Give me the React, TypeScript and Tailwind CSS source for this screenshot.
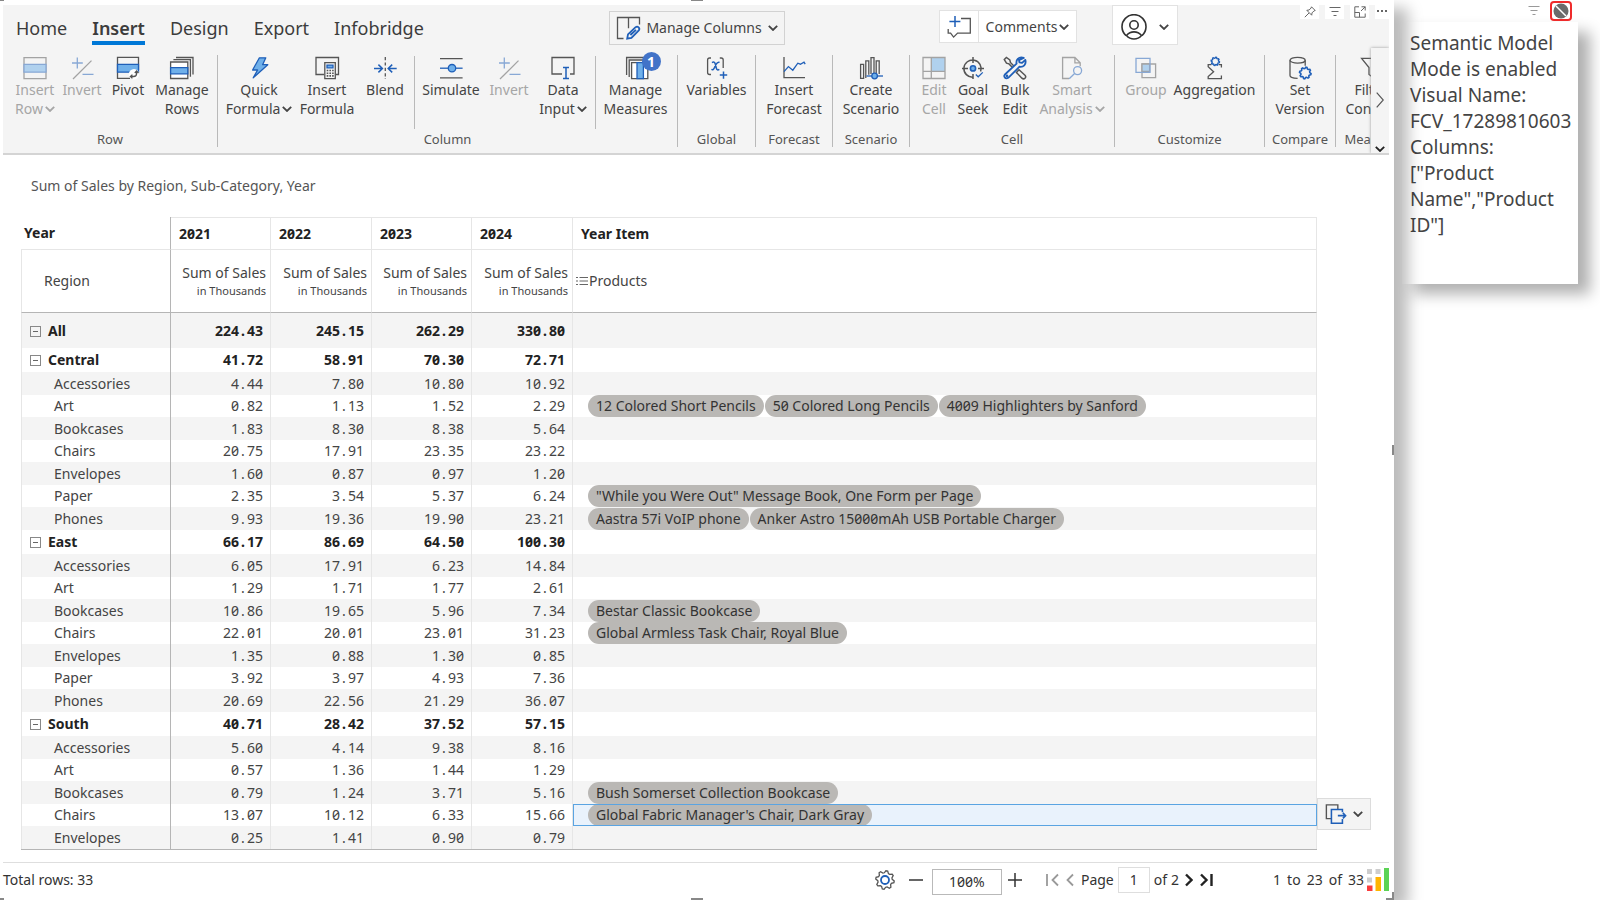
import type { ReactNode } from "react";
import clsx from "clsx";

const GRAY = "#555555";
const BLUE = "#1f5fb8";
const SKY = "#6fb0ea";

interface IconProps {
  children: ReactNode;
}

const Icon = ({ children }: IconProps) => (
  <svg
    viewBox="0 0 24 24"
    className="h-6 w-6 shrink-0 overflow-visible"
    fill="none"
    stroke={GRAY}
    strokeWidth="1.3"
  >
    {children}
  </svg>
);

const Chevron = ({ className }: { className?: string }) => (
  <svg
    viewBox="0 0 10 6"
    className={clsx("h-1.5 w-2.5 shrink-0", className)}
    fill="none"
    stroke="currentColor"
    strokeWidth="1.8"
  >
    <path d="M.8.8 5 5 9.2.8" />
  </svg>
);

const gearPath = (cx: number, cy: number, r: number) =>
  Array.from({ length: 32 }, (_, i) => {
    const a = ((i + 0.5) / 32) * Math.PI * 2;
    const d = i % 4 < 2 ? r : r * 0.78;
    return `${i ? "L" : "M"}${(cx + Math.cos(a) * d).toFixed(2)} ${(cy + Math.sin(a) * d).toFixed(2)}`;
  }).join("") + "Z";

const InsertRowIcon = () => (
  <Icon>
    <path d="M1 1.6h22v21H1z" />
    <path d="M1 8.4h22v7.8H1z" fill={SKY} stroke={BLUE} />
  </Icon>
);

const InvertIcon = () => (
  <Icon>
    <path d="M3 23 21.5 4.6" />
    <path d="M7.3 1.5v11M2 7h10.8M12.5 18.4h11" stroke={BLUE} />
  </Icon>
);

const PivotIcon = () => (
  <Icon>
    <path d="M14 22.4H1.5v-21h21V14" />
    <path d="M13.5 16.2h-12V8.4h21v7.8z" fill={SKY} stroke={BLUE} />
    <circle cx="18" cy="18.2" r="5.2" fill="#fff" stroke="none" />
    <path d="M14.6 20.5h3q3 0 3-3v-2M16.4 18.6l-2 1.9 2 1.9M18.8 17l1.8-2 1.9 2" />
  </Icon>
);

const ManageRowsIcon = () => (
  <Icon>
    <path d="M6 1.5h17v17M3.4 3.7h17v17" />
    <path d="M.6 6h17.2v16.5H.6z" fill="#fff" />
    <path d="M.6 11.6h17.2v6.2H.6z" fill={SKY} stroke={BLUE} />
  </Icon>
);

const BoltIcon = () => (
  <Icon>
    <path
      d="M12.4 1.8h6.4l-3.2 6.9h5.2L6.2 21.8 10.6 14H5.6z"
      fill={SKY}
      stroke={BLUE}
      strokeLinejoin="round"
    />
  </Icon>
);

const InsertFormulaIcon = () => (
  <Icon>
    <path d="M9 18.5H1V1.5h22.5v17H21" />
    <path d="M9.8 6.6h10.5v16H9.8z" fill="#f4f4f4" />
    <path d="M12 9.2h6v2.6h-6z" fill={SKY} stroke={BLUE} />
    <path d="M11.7 14.5h7M11.7 17.2h7M11.7 19.9h7" strokeDasharray="1.6 1.1" strokeWidth="1.6" />
  </Icon>
);

const BlendIcon = () => (
  <Icon>
    <path d="M12.3 1v22" strokeDasharray="3.2 2.2" />
    <path
      d="M1 12.5h8.2M5.4 8.6l4 3.9-4 3.9M23.7 12.5h-8.2M19.2 8.6l-4 3.9 4 3.9"
      stroke={BLUE}
      strokeWidth="1.5"
    />
  </Icon>
);

const SimulateIcon = () => (
  <Icon>
    <path d="M1 2.6h22.6M1 21.8h22.6" />
    <path d="M1 12.2h22.6" stroke={BLUE} />
    <circle cx="13" cy="12.2" r="3.7" fill={SKY} stroke={BLUE} />
  </Icon>
);

const DataInputIcon = () => (
  <Icon>
    <path d="M11 18H1V1.5h22V18h-4" />
    <path d="M12 11.6h6M15 11.6v11M12 22.6h6" stroke={BLUE} strokeWidth="1.5" />
  </Icon>
);

const MeasuresIcon = () => (
  <Icon>
    <path d="M2.6 19V1.5H20M5.2 21V4H22" />
    <path d="M7.6 6.6h16.2v16H7.6z" fill="#fff" />
    <path d="M13 6.6h6.4v16H13z" fill={SKY} stroke={BLUE} />
  </Icon>
);

const VariablesIcon = () => (
  <Icon>
    <path d="M6 2H4.6Q2.6 2 2.6 4v12.5q0 2 2 2H6M14.8 2h1.4q2 0 2 2v8" />
    <path
      d="M7 6.6q2.4-1.6 3.3 1.4l1 4q.8 3 3 1.3M14.6 6.4q-2-.8-3.6 2l-1.6 3.4q-1 2.6-3 1.6"
      stroke={BLUE}
      strokeWidth="1.5"
    />
    <path d="M18.5 15.4v7.4M14.8 19.1h7.4" stroke={BLUE} strokeWidth="1.5" />
  </Icon>
);

const ForecastIcon = () => (
  <Icon>
    <path d="M2 1v20.6h21" />
    <path d="m2 15.6 4.4-5 4.4 3.6 5-7 2.6 1 3.6-2 1.2 2" stroke={BLUE} />
  </Icon>
);

const ScenarioIcon = () => (
  <Icon>
    <path d="M1.6 8.4h3v14h-3zM6.8 22V4.8h3v14M12 18V1.6h3V17M17.2 17V4.8h3V18" />
    <path d="M7.5 20H24" stroke={BLUE} />
    <circle cx="15.6" cy="20" r="2.8" fill={SKY} stroke={BLUE} />
  </Icon>
);

const EditCellIcon = () => (
  <Icon>
    <path d="M9.3 1.5H23v13.8H9.3z" fill={SKY} stroke="none" />
    <path d="M1 1.5h22v21H1zM9.3 1.5v21M1 15.3h22" />
  </Icon>
);

const GoalIcon = () => (
  <Icon>
    <path d="M19.6 15.5A8.6 8.6 0 1 0 12 21.2M12 1v6M1 12.4h6M17 12.4h6M12 18v5" strokeWidth="1.5" />
    <circle cx="12" cy="12.4" r="2.6" fill={SKY} stroke={BLUE} strokeWidth="1.6" />
    <path d="m14.8 18.6 2.4 2.2 4.6-4.4" stroke={BLUE} />
  </Icon>
);

const BulkEditIcon = () => (
  <Icon>
    <path
      d="M1.3 3.6 3.4 1.4l3.4 2.5.6 2.6 4.2 4.3-1.4 1.4L6 7.9l-2.5-.7zM13.4 16.4l2.6-2.7 6 5.5q1.4 1.6 0 3t-3.1 0z"
      strokeWidth="1.5"
    />
    <path
      d="M20.8 1.9q-3.7-1.3-6 1-1.9 2-1.2 4.7L1.9 18.5q-1.3 1.6 0 3.1t3.3.2L16.5 10.7q2.9.6 4.8-1.4 2-2.2 1-5.5l-3.2 3-2.7-.5-.4-2.2z"
      fill="#f4f4f4"
      stroke={BLUE}
      strokeWidth="1.8"
      strokeLinejoin="round"
    />
    <circle cx="3.9" cy="19.8" r=".7" stroke={BLUE} />
  </Icon>
);

const SmartIcon = () => (
  <Icon>
    <path d="M9 22.5H2.6v-21h12.3l5.3 5.2v3.6M14.9 1.5v5.4h5.3" />
    <circle cx="17.6" cy="14.6" r="4" stroke={BLUE} />
    <path d="m14.6 17.5-5.4 5.2" stroke={BLUE} />
  </Icon>
);

const GroupIcon = () => (
  <Icon>
    <path d="M8 8h13.6v13.6H8z" />
    <path d="M8 8h7.6v7.4H8z" fill={SKY} />
    <path d="M2 2.3h14v14H2z" stroke={BLUE} />
  </Icon>
);

const AggregationIcon = () => (
  <Icon>
    <path d="M8.4 8.6H5.2v2.2l5.4 4.9-5.4 4.8v2.1h13.2v-3M16 8.6h2.4v2.8" />
    <path d={gearPath(12.3, 5.4, 4.2)} stroke={BLUE} strokeWidth="1.4" />
  </Icon>
);

const VersionIcon = () => (
  <Icon>
    <ellipse cx="9.6" cy="4.2" rx="7.6" ry="2.9" />
    <path d="M2 4.2v15.4q0 2.6 7.6 2.8M17.2 4.2v5.6" />
    <path d={gearPath(17.3, 17, 5.8)} stroke={BLUE} strokeWidth="1.6" />
  </Icon>
);

const FilterIcon = () => (
  <Icon>
    <path d="M2.6 2.4h18.8L14 11.5v10l-4-3v-7z" />
  </Icon>
);

interface Tool {
  icon: ReactNode;
  lines: string[];
  width: string;
  disabled?: boolean;
  menu?: boolean;
  badge?: string;
  divider?: boolean;
}

interface ToolGroup {
  name: string;
  tools: Tool[];
}

const groups: ToolGroup[] = [
  {
    name: "Row",
    tools: [
      { icon: <InsertRowIcon />, lines: ["Insert", "Row"], width: "w-[52px]", disabled: true, menu: true },
      { icon: <InvertIcon />, lines: ["Invert"], width: "w-[42px]", disabled: true },
      { icon: <PivotIcon />, lines: ["Pivot"], width: "w-[50px]" },
      { icon: <ManageRowsIcon />, lines: ["Manage", "Rows"], width: "w-[58px]" },
    ],
  },
  {
    name: "Column",
    tools: [
      { icon: <BoltIcon />, lines: ["Quick", "Formula"], width: "w-[70px]", menu: true },
      { icon: <InsertFormulaIcon />, lines: ["Insert", "Formula"], width: "w-[66px]" },
      { icon: <BlendIcon />, lines: ["Blend"], width: "w-[50px]", divider: true },
      { icon: <SimulateIcon />, lines: ["Simulate"], width: "w-[64px]" },
      { icon: <InvertIcon />, lines: ["Invert"], width: "w-[52px]", disabled: true },
      { icon: <DataInputIcon />, lines: ["Data", "Input"], width: "w-[56px]", menu: true, divider: true },
      { icon: <MeasuresIcon />, lines: ["Manage", "Measures"], width: "w-[71px]", badge: "1" },
    ],
  },
  { name: "Global", tools: [{ icon: <VariablesIcon />, lines: ["Variables"], width: "w-[65px]" }] },
  { name: "Forecast", tools: [{ icon: <ForecastIcon />, lines: ["Insert", "Forecast"], width: "w-[64px]" }] },
  { name: "Scenario", tools: [{ icon: <ScenarioIcon />, lines: ["Create", "Scenario"], width: "w-[64px]" }] },
  {
    name: "Cell",
    tools: [
      { icon: <EditCellIcon />, lines: ["Edit", "Cell"], width: "w-9", disabled: true },
      { icon: <GoalIcon />, lines: ["Goal", "Seek"], width: "w-[42px]" },
      { icon: <BulkEditIcon />, lines: ["Bulk", "Edit"], width: "w-[42px]" },
      { icon: <SmartIcon />, lines: ["Smart", "Analysis"], width: "w-[72px]", disabled: true, menu: true },
    ],
  },
  {
    name: "Customize",
    tools: [
      { icon: <GroupIcon />, lines: ["Group"], width: "w-[50px]", disabled: true },
      { icon: <AggregationIcon />, lines: ["Aggregation"], width: "w-[87px]" },
    ],
  },
  { name: "Compare", tools: [{ icon: <VersionIcon />, lines: ["Set", "Version"], width: "w-[58px]" }] },
  { name: "Measure", tools: [{ icon: <FilterIcon />, lines: ["Filter", "Context"], width: "w-[58px]" }] },
];

interface Row {
  name: string;
  values: string[];
  items?: string[];
  selected?: boolean;
}

interface Region extends Row {
  children: Row[];
}

const regions: Region[] = [
  { name: "All", values: ["224.43", "245.15", "262.29", "330.80"], children: [] },
  {
    name: "Central",
    values: ["41.72", "58.91", "70.30", "72.71"],
    children: [
      { name: "Accessories", values: ["4.44", "7.80", "10.80", "10.92"] },
      {
        name: "Art",
        values: ["0.82", "1.13", "1.52", "2.29"],
        items: ["12 Colored Short Pencils", "50 Colored Long Pencils", "4009 Highlighters by Sanford"],
      },
      { name: "Bookcases", values: ["1.83", "8.30", "8.38", "5.64"] },
      { name: "Chairs", values: ["20.75", "17.91", "23.35", "23.22"] },
      { name: "Envelopes", values: ["1.60", "0.87", "0.97", "1.20"] },
      {
        name: "Paper",
        values: ["2.35", "3.54", "5.37", "6.24"],
        items: ['"While you Were Out" Message Book, One Form per Page'],
      },
      {
        name: "Phones",
        values: ["9.93", "19.36", "19.90", "23.21"],
        items: ["Aastra 57i VoIP phone", "Anker Astro 15000mAh USB Portable Charger"],
      },
    ],
  },
  {
    name: "East",
    values: ["66.17", "86.69", "64.50", "100.30"],
    children: [
      { name: "Accessories", values: ["6.05", "17.91", "6.23", "14.84"] },
      { name: "Art", values: ["1.29", "1.71", "1.77", "2.61"] },
      { name: "Bookcases", values: ["10.86", "19.65", "5.96", "7.34"], items: ["Bestar Classic Bookcase"] },
      { name: "Chairs", values: ["22.01", "20.01", "23.01", "31.23"], items: ["Global Armless Task Chair, Royal Blue"] },
      { name: "Envelopes", values: ["1.35", "0.88", "1.30", "0.85"] },
      { name: "Paper", values: ["3.92", "3.97", "4.93", "7.36"] },
      { name: "Phones", values: ["20.69", "22.56", "21.29", "36.07"] },
    ],
  },
  {
    name: "South",
    values: ["40.71", "28.42", "37.52", "57.15"],
    children: [
      { name: "Accessories", values: ["5.60", "4.14", "9.38", "8.16"] },
      { name: "Art", values: ["0.57", "1.36", "1.44", "1.29"] },
      { name: "Bookcases", values: ["0.79", "1.24", "3.71", "5.16"], items: ["Bush Somerset Collection Bookcase"] },
      {
        name: "Chairs",
        values: ["13.07", "10.12", "6.33", "15.66"],
        items: ["Global Fabric Manager's Chair, Dark Gray"],
        selected: true,
      },
      { name: "Envelopes", values: ["0.25", "1.41", "0.90", "0.79"] },
    ],
  },
];

const years = ["2021", "2022", "2023", "2024"];

const ToolButton = ({ tool }: { tool: Tool }) => (
  <button
    type="button"
    disabled={tool.disabled}
    className={clsx("relative flex shrink-0 flex-col items-center", tool.width)}
  >
    <span className={clsx("relative", tool.disabled && "opacity-50")}>
      {tool.icon}
      {tool.badge && (
        <span className="absolute -top-1 left-[18px] flex h-[19px] w-[19px] items-center justify-center rounded-full bg-[#4273c8] text-sm leading-none font-bold text-white">
          {tool.badge}
        </span>
      )}
    </span>
    {tool.lines.map((line, i) => (
      <span
        key={line}
        className={clsx(
          "flex items-center gap-0.5 text-sm leading-[19px] whitespace-nowrap",
          tool.disabled ? "text-[#a6a6a6]" : "text-[#444]"
        )}
      >
        {line}
        {tool.menu && i === tool.lines.length - 1 && <Chevron />}
      </span>
    ))}
  </button>
);

const Ribbon = () => (
  <header className="relative mt-[5px] mr-[5px] ml-[3px] overflow-hidden border-b-2 border-[#d4d4d4] bg-[#f4f4f4]">
    <div className="flex h-[50px] items-start">
      <nav className="flex flex-1 gap-[25px] pt-2.5 pl-[13px] text-lg leading-[26px] text-[#3c3c3c]">
        {["Home", "Insert", "Design", "Export", "Infobridge"].map((tab) => (
          <a
            key={tab}
            href="#"
            className={clsx(
              "border-b-4",
              tab === "Insert" ? "border-[#0078d7] font-semibold" : "border-transparent"
            )}
          >
            {tab}
          </a>
        ))}
      </nav>
      <div className="mr-[211px] flex items-start text-sm text-[#444]">
        <button
          type="button"
          className="mt-1.5 mr-[154px] flex h-[34px] w-[176px] items-center justify-center gap-1.5 border border-[#d2d2d2] whitespace-nowrap"
        >
          <Icon>
            <path d="M7.5 22.5H1.5v-21h22v7M12.5 1.5v10.8" />
            <g stroke={BLUE} strokeWidth="1.8">
              <path d="m12 18.4 7.6-7.2q1.6-1.2 3 .2t.2 3l-7.4 7.4-4.2.8zM14.4 19l5.6-5.2" />
            </g>
          </Icon>
          Manage Columns
          <Chevron />
        </button>
        <div className="mt-[5px] mr-[35px] flex h-[33px] border border-[#e2e2e2] bg-white">
          <button
            type="button"
            aria-label="Add comment"
            className="flex w-[39px] items-center justify-center border-r border-[#e2e2e2]"
          >
            <Icon>
              <path d="M14 3.5h9.3v14.6H10.6l-4 4-3-4H1.2v-4" />
              <path d="M8 1v11M2.4 6.5h11" stroke={BLUE} strokeWidth="1.5" />
            </Icon>
          </button>
          <button type="button" className="flex w-[97px] items-center justify-center gap-0.5">
            Comments
            <Chevron />
          </button>
        </div>
        <button
          type="button"
          aria-label="Account"
          className="flex h-10 w-[66px] items-center justify-center gap-3 border border-[#e2e2e2] bg-white pt-1"
        >
          <svg viewBox="0 0 26 26" className="h-[26px] w-[26px]" fill="none" stroke="#333" strokeWidth="1.6">
            <path d="M5 21.6A12 12 0 1 1 21 21.600" />
            <circle cx="13" cy="11" r="4.2" />
            <path d="M5.5 21.5q3-3.6 7.5-3.6t7.5 3.6Q17.5 25 13 25t-7.5-3.5z" />
          </svg>
          <Chevron />
        </button>
      </div>
    </div>
    <div className="flex pb-1.5">
      {groups.map((group) => (
        <div
          key={group.name}
          className="flex h-[92px] shrink-0 flex-col justify-between border-r border-[#b9b9b9] px-1.5 pt-px"
        >
          <div className="flex h-[73px]">
            {group.tools.map((tool, i) => (
              <div key={i} className="flex">
                <ToolButton tool={tool} />
                {tool.divider && <span className="mx-1 w-px bg-[#b9b9b9]" />}
              </div>
            ))}
          </div>
          <p className="text-center text-[13px] leading-4 text-[#555]">{group.name}</p>
        </div>
      ))}
    </div>
    <div className="absolute top-[43px] right-0 bottom-0 flex w-[18px] flex-col items-center justify-end gap-[38px] bg-[#f4f4f4] pb-px shadow-[0_0_3px_#999]">
      <button type="button" aria-label="Scroll right">
        <svg viewBox="0 0 8 16" className="h-4 w-2" fill="none" stroke="#555" strokeWidth="1.2">
          <path d="m.7.7 6.6 7.3-6.600 7.300" />
        </svg>
      </button>
      <button type="button" aria-label="Collapse ribbon" className="text-[#222]">
        <Chevron />
      </button>
    </div>
    <div className="absolute top-0 right-0 flex gap-1.5 text-[#666]">
      <button type="button" aria-label="Pin" className="h-3.5 w-[19px] bg-white">
        <svg viewBox="0 0 12 12" className="mx-auto h-3 w-3" fill="none" stroke="currentColor">
          <path d="m7.5.8 3.7 3.7-1.2.4-2 2-.3 2.300L2.800 4.300 5.100 4l2-2zM5 7 .8 11.200" />
        </svg>
      </button>
      <button type="button" aria-label="Filters" className="h-3.5 w-[19px] bg-white">
        <svg viewBox="0 0 12 12" className="mx-auto h-3 w-3" fill="none" stroke="currentColor">
          <path d="M.5 1.5h11M2.500 5.5h7M4.5 9.5h3" />
        </svg>
      </button>
      <button type="button" aria-label="Focus mode" className="h-3.5 w-[19px] bg-white">
        <svg viewBox="0 0 12 12" className="mx-auto h-3 w-3" fill="none" stroke="currentColor">
          <path d="M5 .8H.8v10.4h10.4V7.5M7.5.8h3.7v3.7M11.2.8 7 5M.8 6.5h4.7v4.7" />
        </svg>
      </button>
      <button type="button" aria-label="More options" className="h-3.5 w-3.5 bg-white">
        <svg viewBox="0 0 12 12" className="mx-auto h-3 w-3" fill="currentColor">
          <path d="M1 4h2v2H1zM5 4h2v2H5zM9 4h2v2H9z" />
        </svg>
      </button>
    </div>
  </header>
);

// digits are tabular, so the decimal point gets a digit-wide box too
const Amount = ({ value }: { value: string }) => {
  const [whole, fraction] = value.split(".");
  return (
    <>
      {whole}
      <span className="inline-block w-2 text-center">.</span>
      {fraction}
    </>
  );
};

const DataRow = ({ row, index }: { row: Row; index: number }) => (
  <tr className={clsx(index % 2 === 0 ? "h-[23px] bg-[#f4f4f4]" : "h-[22px]")}>
    <th scope="row" className="border-r border-l border-r-[#b5b5b5] border-l-[#e6e6e6] pl-8 text-left font-normal">
      {row.name}
    </th>
    {row.values.map((value, i) => (
      <td key={i} className="border-r border-[#e6e6e6] pr-[7px] text-right">
        <Amount value={value} />
      </td>
    ))}
    <td
      className={clsx(
        "relative pl-[15px]",
        row.selected ? "bg-[#e9f2fc] outline -outline-offset-1 outline-[#5aa4e2]" : "border-r border-[#e6e6e6]"
      )}
    >
      <div className="flex gap-px whitespace-nowrap">
        {row.items?.map((item) => (
          <span key={item} className="h-[22px] rounded-full bg-[#bab8b5] px-2 leading-[22px] text-[#333]">
            {item}
          </span>
        ))}
      </div>
      {row.selected && (
        <button
          type="button"
          aria-label="Copy options"
          className="absolute -top-[6px] left-full flex h-8 w-[54px] items-center justify-center gap-1.5 border border-[#dcdcdc] bg-[#f4f4f4]"
        >
          <svg viewBox="0 0 24 24" className="h-[22px] w-[22px]" fill="none" stroke={GRAY} strokeWidth="1.5">
            <path d="M7 17H1.5V2H14v4.5" />
            <path d="M19 10V7H7v15h12v-4.5M14 13.8h8.5M19.5 10.8l3 3-3 3" stroke={BLUE} strokeWidth="1.7" />
          </svg>
          <Chevron />
        </button>
      )}
    </td>
  </tr>
);

const Collapse = () => (
  <button type="button" aria-label="Collapse" className="mr-[7px] inline-block h-[11px] w-[11px] border border-[#888]">
    <span className="mx-auto block h-px w-[5px] bg-[#666]" />
  </button>
);

const Matrix = () => (
  <table className="w-full table-fixed border-separate border-spacing-0 border-b border-[#b5b5b5] text-sm leading-[22px] text-[#444] slashed-zero [&_td]:py-0">
    <colgroup>
      <col className="w-[150px]" />
      <col className="w-[100px]" />
      <col className="w-[101px]" />
      <col className="w-[100px]" />
      <col className="w-[101px]" />
      <col />
    </colgroup>
    <thead>
      <tr className="h-[33px] text-left font-bold text-[#222]">
        <th className="border-r border-b border-r-[#b5b5b5] border-b-[#e6e6e6] pl-[3px]">Year</th>
        {years.map((year) => (
          <th key={year} className="border-t border-r border-b border-[#e6e6e6] pl-2">
            {year}
          </th>
        ))}
        <th className="border-t border-r border-b border-[#e6e6e6] pl-2">Year Item</th>
      </tr>
      <tr className="h-[63px]">
        <th className="border-r border-b border-l border-[#b5b5b5] border-l-[#e6e6e6] pl-[22px] text-left font-normal">
          Region
        </th>
        {years.map((year) => (
          <th key={year} className="border-r border-b border-r-[#e6e6e6] border-b-[#b5b5b5] pr-1 text-right font-normal">
            <span className="block leading-5">Sum of Sales</span>
            <span className="block text-[11px] leading-4">in Thousands</span>
          </th>
        ))}
        <th className="border-r border-b border-r-[#e6e6e6] border-b-[#b5b5b5] pl-[3px] text-left font-normal">
          <span className="flex items-center gap-px">
            <svg viewBox="0 0 12 10" className="h-2.5 w-3" stroke="#666">
              <path d="M0 1.5h2M0 5h2M0 8.5h2M3.5 1.5H12M3.5 5H12M3.5 8.5H12" />
            </svg>
            Products
          </span>
        </th>
      </tr>
    </thead>
    {regions.map((region) => (
      <tbody key={region.name}>
        <tr
          className={clsx(
            "font-bold text-[#222]",
            region.name === "All" ? "h-[35px] bg-[#f4f4f4]" : "h-6"
          )}
        >
          <th scope="row" className="border-r border-l border-r-[#b5b5b5] border-l-[#e6e6e6] pl-2 text-left">
            <Collapse />
            {region.name}
          </th>
          {region.values.map((value, i) => (
            <td key={i} className="border-r border-[#e6e6e6] pr-[7px] text-right">
              <Amount value={value} />
            </td>
          ))}
          <td className="border-r border-[#e6e6e6]" />
        </tr>
        {region.children.map((row, i) => (
          <DataRow key={row.name} row={row} index={i} />
        ))}
      </tbody>
    ))}
  </table>
);

const StatusBar = () => (
  <footer className="mr-[5px] ml-[3px] flex h-[38px] items-center border-t border-[#dedede] pb-1 text-sm text-[#333] slashed-zero">
    <p className="flex-1">Total rows: 33</p>
    <button type="button" aria-label="Settings">
      <svg viewBox="0 0 20 20" className="h-5 w-5" fill="none" stroke={GRAY} strokeWidth="1.3">
        <path d={gearPath(10, 10, 9.3)} />
        <circle cx="10" cy="10" r="4" stroke={BLUE} strokeWidth="1.8" />
      </svg>
    </button>
    <button type="button" aria-label="Zoom out" className="ml-3.5">
      <svg viewBox="0 0 14 14" className="h-3.5 w-3.5" stroke="#333" strokeWidth="1.5">
        <path d="M0 7h14" />
      </svg>
    </button>
    <input
      aria-label="Zoom"
      defaultValue="100%"
      className="mt-1 ml-[9px] h-[26px] w-[70px] border border-[#b9b9b9] text-center"
    />
    <button type="button" aria-label="Zoom in" className="ml-1.5">
      <svg viewBox="0 0 14 14" className="h-3.5 w-3.5" stroke="#333" strokeWidth="1.5">
        <path d="M0 7h14M7 0v14" />
      </svg>
    </button>
    <button type="button" aria-label="First page" className="ml-6">
      <svg viewBox="0 0 14 14" className="h-3.5 w-3.5" fill="none" stroke="#999" strokeWidth="1.8">
        <path d="M1 1v12M12 1.5 6.5 7l5.5 5.5" />
      </svg>
    </button>
    <button type="button" aria-label="Previous page" className="ml-1.5">
      <svg viewBox="0 0 8 14" className="h-3.5 w-2" fill="none" stroke="#999" strokeWidth="1.8">
        <path d="M7 1.5 1.5 7 7 12.5" />
      </svg>
    </button>
    <label htmlFor="page" className="ml-[7px]">
      Page
    </label>
    <input
      id="page"
      defaultValue="1"
      className="ml-1 h-[26px] w-8 border border-[#dedede] text-center"
    />
    <span className="ml-1 flex gap-1">
      <span>of</span>
      <span>2</span>
    </span>
    <button type="button" aria-label="Next page" className="ml-1.5">
      <svg viewBox="0 0 8 14" className="h-3.5 w-2" fill="none" stroke="#222" strokeWidth="2.4">
        <path d="M1 1.5 6.5 7 1 12.5" />
      </svg>
    </button>
    <button type="button" aria-label="Last page" className="ml-1.5">
      <svg viewBox="0 0 14 14" className="h-3.5 w-3.5" fill="none" stroke="#222" strokeWidth="2.4">
        <path d="M12.500 1v12M2 1.5 7.5 7 2 12.5" />
      </svg>
    </button>
    <p className="ml-[60px] flex gap-1.5">
      {["1", "to", "23", "of", "33"].map((word) => (
        <span key={word}>{word}</span>
      ))}
    </p>
    <svg viewBox="0 0 22 23" className="ml-[3px] h-[23px] w-[22px]">
      <path d="M0 1h5v5H0zM0 9.5h5v5H0zM8.500 1h5v5h-5z" fill="#cdcdcd" />
      <path d="M0 17.5h5.5V23H0z" fill="#fa3c3c" />
      <path d="M8.5 9H14v14H8.5z" fill="#ffb400" />
      <path d="M17 0h5v23h-5z" fill="#5bd355" />
    </svg>
  </footer>
);

const App = () => {
  return (
    <div className="flex min-h-screen overflow-hidden bg-white font-['Noto_Sans','Open_Sans',sans-serif]">
      <main className="relative z-10 flex min-w-0 flex-1 flex-col bg-white shadow-[14px_8px_14px_#00000044]">
        <span className="absolute top-0 left-0 h-px w-1 bg-[#888]" />
        <span className="absolute top-0 left-1/2 h-px w-3 -translate-x-1/2 bg-[#888]" />
        <span className="absolute right-0 bottom-0 h-2 w-2 border-r-2 border-b-2 border-[#888]" />
        <span className="absolute bottom-0 left-0 h-0.5 w-1 bg-[#888]" />
        <span className="absolute bottom-0 left-1/2 h-0.5 w-3 -translate-x-1/2 bg-[#888]" />
        <span className="absolute top-1/2 right-0 h-2.5 w-0.5 -translate-y-1/2 bg-[#888]" />
        <Ribbon />
        <h1 className="mt-5 mb-5 ml-[31px] text-sm leading-[22px] text-[#555]">
          Sum of Sales by Region, Sub-Category, Year
        </h1>
        <div className="mr-[77px] ml-[21px] flex-1">
          <Matrix />
        </div>
        <StatusBar />
      </main>
      <aside className="w-[206px] shrink-0">
        <div className="flex h-[22px] items-center justify-end gap-2.5 pr-7 text-[#999]">
          <button type="button" aria-label="Filters">
            <svg viewBox="0 0 12 12" className="h-3 w-3" fill="none" stroke="currentColor">
              <path d="M.5 1.5h11M2.5 5.5h7M4.5 9.5h3" />
            </svg>
          </button>
          <button
            type="button"
            aria-label="Disabled"
            className="flex h-5 w-[22px] items-center justify-center rounded border-2 border-[#ef2b2b] bg-white"
          >
            <svg viewBox="0 0 16 16" className="h-4 w-4">
              <circle cx="8" cy="8" r="7.5" fill="#6b6b6b" />
              <path d="m3 3 10 10" stroke="#fff" strokeWidth="1.5" />
            </svg>
          </button>
        </div>
        <div className="mr-[22px] ml-2 h-[262px] bg-white pt-2 pl-2 text-[19px] leading-[26px] text-[#444] shadow-[12px_10px_14px_#00000050]">
          Semantic Model
          <br />
          Mode is enabled
          <br />
          Visual Name:
          <br />
          FCV_17289810603
          <br />
          Columns:
          <br />
          ["Product
          <br />
          Name","Product
          <br />
          ID"]
        </div>
      </aside>
    </div>
  );
};

export default App;
